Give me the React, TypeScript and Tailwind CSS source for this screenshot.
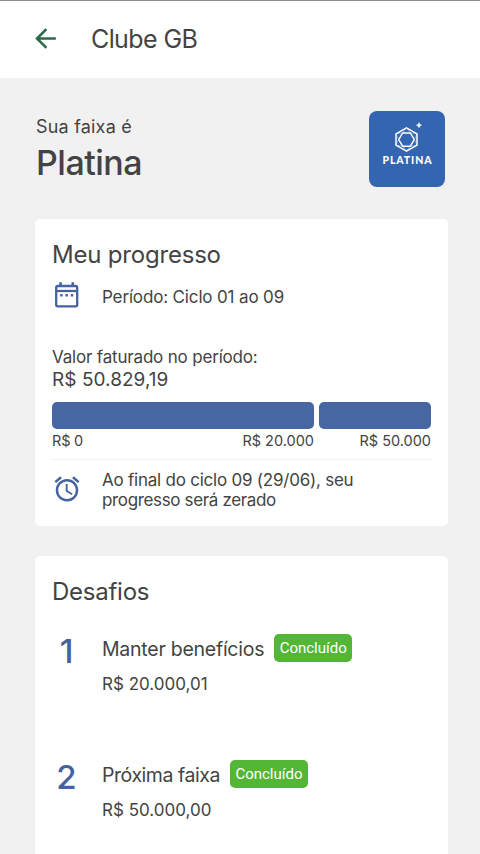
import { MdAccessAlarm, MdArrowBack } from "react-icons/md";

type Challenge = {
  position: number;
  title: string;
  titleClass: string;
  amount: string;
};

const challenges: Challenge[] = [
  { position: 1, title: "Manter benefícios", titleClass: "tracking-[-0.25px]", amount: "R$ 20.000,01" },
  { position: 2, title: "Próxima faixa", titleClass: "tracking-[-0.45px]", amount: "R$ 50.000,00" }
];

export default function App() {
  return (
    <div className="flex h-[854px] w-[480px] flex-col overflow-hidden bg-[#f1f1f1] font-['Inter',sans-serif] whitespace-nowrap text-[#434343]">
      <header className="flex h-[78px] shrink-0 items-center border-t border-[#8e8e8e] bg-white pl-[30px]">
        <MdArrowBack className="mb-[3px] size-[31px] text-[#2b6b4b]" />
        <h1 className="mb-[2px] ml-[30px] text-[25px] leading-[30px] tracking-[-0.6px]">Clube GB</h1>
      </header>
      <main className="flex flex-col px-[35px] pt-[33px]">
        <TierHeader />
        <ProgressCard />
        <ChallengesCard />
      </main>
    </div>
  );
}

function TierHeader() {
  return (
    <section className="flex h-[76px] justify-between">
      <div className="pt-[5px] pl-px">
        <p className="text-[18px] leading-[22px] tracking-[0.2px]">Sua faixa é</p>
        <p className="mt-[4px] text-[34px] leading-[42px] font-medium tracking-[-0.5px]">Platina</p>
      </div>
      <div className="flex size-[76px] flex-col items-center rounded-[8px] bg-[#3365b1] pt-[11px] text-white">
        <GemIcon />
        <span className="pl-px font-['Lato',sans-serif] text-[10.5px] leading-[14px] font-black tracking-[0.9px]">
          PLATINA
        </span>
      </div>
    </section>
  );
}

function GemIcon() {
  return (
    <svg className="h-[31px] w-[36px]" viewBox="0 0 36 31" fill="none" stroke="currentColor" strokeLinejoin="round">
      <path d="M17.5 5.8 28 11.8v11.4l-10.5 6-10.5-6V11.8Z" strokeWidth="1.5" />
      <path d="M13.6 11h7.8l3.9 6.6-3.9 6.6h-7.8l-3.9-6.6Z" strokeWidth="1.4" />
      <path
        d="M17.5 5.8 13.6 11M17.5 5.8l3.9 5.2M7 11.8l6.6-.8M7 11.8l2.7 5.8M7 23.2l2.7-5.6M7 23.2l6.6 1M17.5 29.2l-3.9-5M17.5 29.2l3.9-5M28 11.8l-6.6-.8M28 11.8l-2.7 5.8M28 23.2l-2.7-5.6M28 23.2l-6.6 1"
        strokeWidth="0.6"
        opacity="0.6"
      />
      <path d="M30 .6l.8 1.8 1.8.8-1.8.8-.8 1.8-.8-1.8-1.8-.8 1.8-.8Z" fill="currentColor" strokeWidth="0.5" />
    </svg>
  );
}

function CalendarIcon() {
  return (
    <svg className="size-[30px]" viewBox="0 0 30 30" fill="none" stroke="currentColor" strokeWidth="2.3">
      <rect x="4.2" y="6" width="21" height="20.4" rx="1.6" />
      <path d="M4.2 11h21" />
      <path d="M8.6 2.3V6M20.8 2.3V6" strokeWidth="2.6" />
      <path d="M8.2 15.3h2.4M13.5 15.3h2.4M18.8 15.3h2.4" strokeWidth="2.4" />
    </svg>
  );
}

function ProgressCard() {
  return (
    <section className="mt-[32px] flex h-[307px] w-[413px] shrink-0 flex-col rounded-[5px] bg-white px-[17px] pt-[20px]">
      <h2 className="text-[24px] leading-[32px] tracking-[-0.2px]">Meu progresso</h2>
      <div className="mt-[9px] flex h-[30px] items-center text-[#44639f]">
        <CalendarIcon />
        <p className="mt-[3px] ml-[20px] text-[17px] leading-[20px] tracking-[-0.15px] text-[#434343]">
          Período: Ciclo 01 ao 09
        </p>
      </div>
      <p className="mt-[37px] text-[17px] leading-[20px] tracking-[-0.18px]">Valor faturado no período:</p>
      <p className="mt-px text-[19px] leading-[24px] tracking-[0.05px]">R$ 50.829,19</p>
      <div className="mt-[10px] flex gap-[5px]">
        <div className="h-[27px] w-[262px] rounded-[5px] bg-[#4767a2]" />
        <div className="h-[27px] w-[112px] rounded-[5px] bg-[#4767a2]" />
      </div>
      <div className="mt-[3px] flex gap-[5px] text-[14.5px] leading-[18px]">
        <div className="flex w-[262px] justify-between">
          <span className="tracking-[-0.2px]">R$ 0</span>
          <span>R$ 20.000</span>
        </div>
        <span className="w-[112px] text-right">R$ 50.000</span>
      </div>
      <div className="mt-[9px] flex h-[60px] items-center border-t border-[#f1f1f1]">
        <MdAccessAlarm className="mb-px size-[30px] text-[#44639f]" />
        <p className="ml-[20px] text-[17px] leading-[20px] tracking-[-0.23px]">
          Ao final do ciclo 09 (29/06), seu
          <br />
          <span className="tracking-[-0.35px]">progresso será zerado</span>
        </p>
      </div>
    </section>
  );
}

function ChallengesCard() {
  return (
    <section className="mt-[30px] flex h-[320px] w-[413px] shrink-0 flex-col rounded-[5px] bg-white px-[17px] pt-[20px]">
      <h2 className="text-[24px] leading-[32px] tracking-[-0.25px]">Desafios</h2>
      <ul className="mt-[26px] flex flex-col">
        {challenges.map(challenge => (
          <ChallengeItem key={challenge.position} challenge={challenge} />
        ))}
      </ul>
    </section>
  );
}

function ChallengeItem({ challenge }: { challenge: Challenge }) {
  return (
    <li className="flex h-[126px]">
      <span className="w-[29px] text-center text-[33px] leading-[34px] font-medium text-[#4262a0]">
        {challenge.position}
      </span>
      <div className="ml-[21px]">
        <div className="flex h-[28px] items-center gap-[10px]">
          <span className={`pt-[2px] text-[19.5px] leading-[28px] ${challenge.titleClass}`}>{challenge.title}</span>
          <span className="flex h-[28px] w-[78px] items-center justify-center rounded-[5px] bg-[#53b735] pt-px font-['Roboto',sans-serif] text-[15px] text-white">
            Concluído
          </span>
        </div>
        <p className="mt-[12px] text-[17px] leading-[20px]">{challenge.amount}</p>
      </div>
    </li>
  );
}
